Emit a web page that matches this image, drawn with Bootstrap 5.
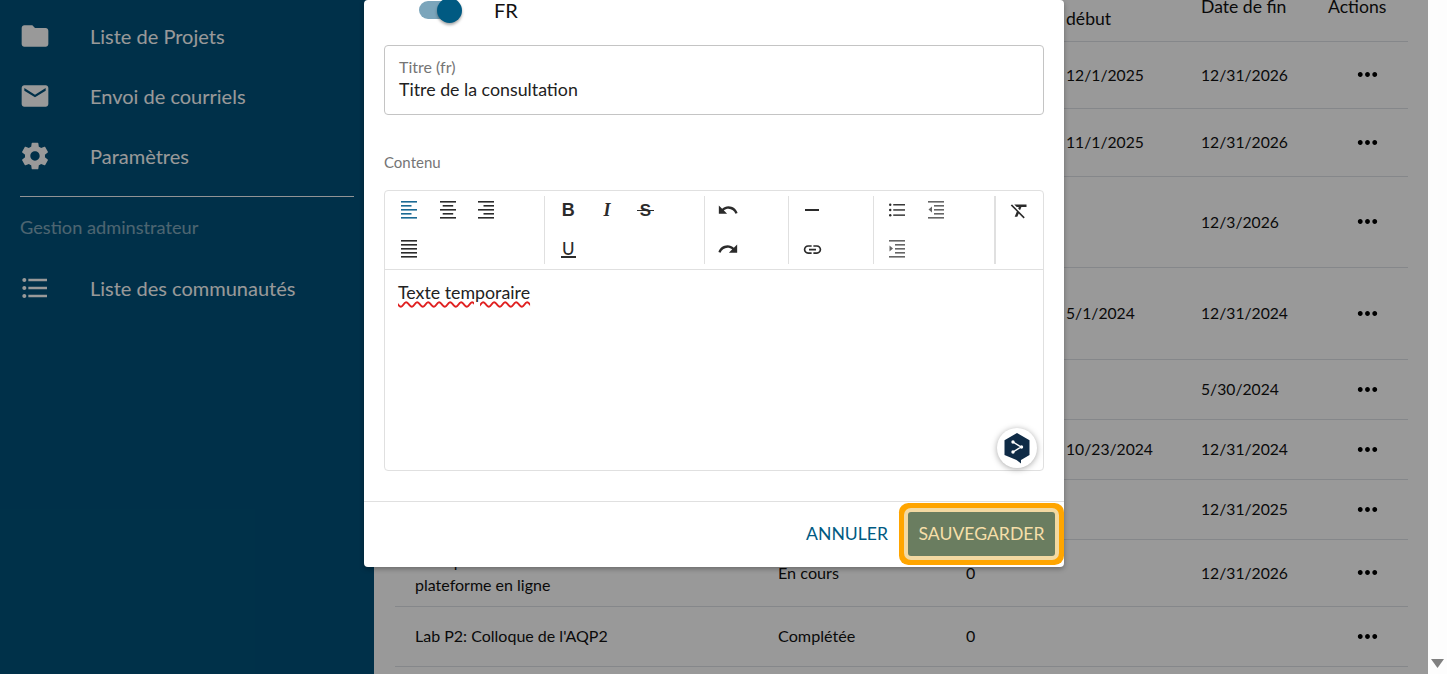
<!DOCTYPE html>
<html lang="fr">

<head>
  <meta charset="UTF-8" />
  <meta name="viewport" content="width=device-width, initial-scale=1.0" />
  <title>Consultation</title>
  <link href="https://cdn.jsdelivr.net/npm/bootstrap@5.3.0/dist/css/bootstrap.min.css" rel="stylesheet" />
  <style>
    html, body { height: 100%; overflow: hidden; }
    body { font-family: Lato, "Liberation Sans", sans-serif; background: #fff; color: #111; }

    /* Page frame */
    .page-frame { height: 100vh; }
    .page-area { min-width: 0; overflow: hidden; }
    .fake-scrollbar { width: 19px; background: #fdfdfd; }
    .fake-scrollbar svg { margin: 0 3px 6px; }

    /* Sidebar */
    .side-panel { width: 374px; background: #00517a; color: #fff; padding-top: 6px; }
    .side-item { height: 60px; font-size: 20px; }
    .side-icon { width: 32px; height: 32px; margin: 0 39px 0 19px; fill: #fff; }
    .side-rule { height: 1px; margin: 10px 20px 0; background: #fff; opacity: .95; }
    .side-label { font-size: 18.2px; height: 61px; padding: 17px 0 0 20px; opacity: .5; line-height: 26px; }

    /* Table behind the dialog */
    .table-area { padding: 0 20px 0 21px; margin-top: -27px; }
    .data-table { table-layout: fixed; font-size: 16px; width: 1013px; --bs-table-bg: transparent; --bs-table-color: #111; }
    .data-table th { font-weight: 400; line-height: 30px; vertical-align: middle; padding: 0 0 0 20px; height: 68px; font-size: 17.6px; }
    .data-table th:nth-child(4) { padding-bottom: 6px; }
    .data-table td { vertical-align: middle; padding: 0 0 0 20px; line-height: 24px; }
    .data-table td:nth-child(2) { font-size: 16.2px; }
    .data-table td:nth-child(4), .data-table td:nth-child(5) { font-size: 15.7px; }
    .c-name { width: 363px; }
    .c-state { width: 188px; }
    .c-count { width: 100px; }
    .c-start { width: 135px; }
    .c-end { width: 127px; }
    .c-act { width: 100px; }
    .r60 { height: 60px; }
    .r67 { height: 67px; }
    .r68 { height: 68px; }
    .r91 { height: 91px; }
    .r92 { height: 92px; }
    .dots { width: 29px; height: 29px; margin-left: 25px; display: block; fill: #000; }

    /* Backdrop and dialog */
    .dim-layer { position: absolute; inset: 0; background: rgba(0, 0, 0, .4); padding-bottom: 107px; }
    .dialog-box { width: 700px; flex: none; border: 0; border-radius: 4px; padding-top: 20px; background: #fff;
      box-shadow: 0 2px 5px rgba(0,0,0,.3); }
    .dialog-body { padding: 0 20px; height: 481px; }

    .lang-row { height: 45px; padding: 0 0 0 35px; margin-top: -20px; font-size: 20px; padding-bottom: 25px; }
    .lang-track { width: 38px; height: 18px; background: #7ba5bb; border-radius: 9px; position: relative; margin-right: 37px; }
    .lang-thumb { position: absolute; right: -5px; top: -3px; width: 25px; height: 25px; border-radius: 50%; background: #005a82;
      box-shadow: 0 2px 3px rgba(0,0,0,.35); }

    .title-field { height: 70px; border: 1px solid #c4c4c4; border-radius: 4px; padding: 12px 14px 0; }
    .title-label { font-size: 16px; line-height: 18px; color: #757575; }
    .title-value { font-size: 17.8px; line-height: 26px; color: #212121; }
    .body-label { font-size: 15px; color: #757575; line-height: 18px; margin: 38px 0 19px; }

    .editor-box { position: relative; height: 281px; border: 1px solid #e0e0e0; border-radius: 4px; }
    .tool-row { height: 79px; padding: 5px 0; border-bottom: 1px solid #e0e0e0; }
    .tool-group { display: grid; grid-auto-rows: 28px; row-gap: 11px; padding-left: 4px; border-right: 1px solid #e0e0e0; }
    .g3 { grid-template-columns: repeat(3, 38.6px); width: 160px; }
    .g3.first-group { padding-left: 5px; }
    .g1 { grid-template-columns: 38.6px; }
    .g2 { grid-template-columns: repeat(2, 38.6px); width: 122px; }
    .w84 { width: 84px; }
    .w85 { width: 85px; }
    .last-group { width: 48px; border-right: 0; border-left: 2px solid #e0e0e0; margin-left: -2px; }
    .tool-btn { color: #2b2b2b; font-size: 18px; line-height: 1; }
    .tool-btn svg { fill: #2b2b2b; display: block; }
    .tool-bold { font-family: "Liberation Sans", sans-serif; font-weight: 700; }
    .tool-ital { font-family: "Liberation Serif", serif; font-weight: 700; font-style: italic; }
    .tool-strike { position: relative; font-size: 17px; }
    .tool-strike::after { content: ""; position: absolute; left: -3px; right: -3px; top: 8px; height: 1.5px; background: #2b2b2b; }
    .tool-under { border-bottom: 2px solid #2b2b2b; padding: 0 1px; line-height: 15px; font-weight: 500; font-size: 17px; margin-top: 1px; }
    .editor-text { padding: 10px 13px; font-size: 17.8px; line-height: 24px; color: #222; }
    .spell-bad { text-decoration: underline wavy #e02020 1.5px; text-underline-offset: 2px; }
    .helper-bubble { position: absolute; right: 6px; bottom: 2px; width: 40px; height: 40px; border-radius: 50%; background: #fff;
      box-shadow: 0 1px 6px rgba(0,0,0,.35); }

    .dialog-foot { height: 66px; border-top: 1px solid #e0e0e0; padding-right: 9px; }
    .btn-cancel { color: #005a82; font-size: 17.6px; padding: 0; margin-right: 20px; border: 0; }
    .btn-save { width: 147px; height: 44px; padding: 2px 0 0; border: 0; border-radius: 3px; margin-bottom: 2px; font-size: 17.6px;
      background: #6a7d60; color: #f6dfa9; box-shadow: 0 0 0 4px #f3d9a2, 0 0 0 9px #ffa500; }
    .btn-save:hover { background: #6a7d60; color: #f6dfa9; }
  </style>
</head>

<body>
  <div class="page-frame d-flex">
    <div class="page-area flex-grow-1 position-relative d-flex">
      <!-- Sidebar -->
      <div class="side-panel flex-shrink-0">
        <div class="side-item d-flex align-items-center">
          <svg class="side-icon" viewBox="0 0 24 24"><path d="M10 4H4c-1.1 0-1.99.9-1.99 2L2 18c0 1.1.9 2 2 2h16c1.1 0 2-.9 2-2V8c0-1.1-.9-2-2-2h-8l-2-2z"/></svg>
          Liste de Projets
        </div>
        <div class="side-item d-flex align-items-center">
          <svg class="side-icon" viewBox="0 0 24 24"><path d="M20 4H4c-1.1 0-1.99.9-1.99 2L2 18c0 1.1.9 2 2 2h16c1.1 0 2-.9 2-2V6c0-1.1-.9-2-2-2zm0 4l-8 5-8-5V6l8 5 8-5v2z"/></svg>
          Envoi de courriels
        </div>
        <div class="side-item d-flex align-items-center">
          <svg class="side-icon" viewBox="0 0 24 24"><path d="M19.43 12.98c.04-.32.07-.64.07-.98s-.03-.66-.07-.98l2.11-1.65c.19-.15.24-.42.12-.64l-2-3.46c-.12-.22-.39-.3-.61-.22l-2.49 1c-.52-.4-1.08-.73-1.69-.98l-.38-2.65C14.46 2.18 14.25 2 14 2h-4c-.25 0-.46.18-.49.42l-.38 2.65c-.61.25-1.17.59-1.69.98l-2.49-1c-.23-.09-.49 0-.61.22l-2 3.46c-.13.22-.07.49.12.64l2.11 1.65c-.04.32-.07.65-.07.98s.03.66.07.98l-2.11 1.65c-.19.15-.24.42-.12.64l2 3.46c.12.22.39.3.61.22l2.49-1c.52.4 1.08.73 1.69.98l.38 2.65c.03.24.24.42.49.42h4c.25 0 .46-.18.49-.42l.38-2.65c.61-.25 1.17-.59 1.69-.98l2.49 1c.23.09.49 0 .61-.22l2-3.46c.12-.22.07-.49-.12-.64l-2.11-1.65zM12 15.5c-1.93 0-3.5-1.57-3.5-3.5s1.57-3.5 3.5-3.5 3.5 1.57 3.5 3.5-1.57 3.5-3.5 3.5z"/></svg>
          Paramètres
        </div>
        <div class="side-rule"></div>
        <div class="side-label">Gestion adminstrateur</div>
        <div class="side-item d-flex align-items-center">
          <svg class="side-icon" viewBox="0 0 24 24"><path d="M4 10.5c-.83 0-1.5.67-1.5 1.5s.67 1.5 1.5 1.5 1.5-.67 1.5-1.5-.67-1.5-1.5-1.5zm0-6c-.83 0-1.5.67-1.5 1.5S3.17 7.5 4 7.5 5.5 6.83 5.5 6 4.83 4.5 4 4.5zm0 12c-.83 0-1.5.68-1.5 1.5s.68 1.5 1.5 1.5 1.5-.68 1.5-1.5-.67-1.5-1.5-1.5zM7 19h14v-2H7v2zm0-6h14v-2H7v2zm0-8v2h14V5H7z"/></svg>
          Liste des communautés
        </div>
      </div>

      <!-- Table -->
      <div class="table-area flex-grow-1">
        <table class="table data-table mb-0">
          <colgroup>
            <col class="c-name" /><col class="c-state" /><col class="c-count" /><col class="c-start" /><col class="c-end" /><col class="c-act" />
          </colgroup>
          <thead>
            <tr><th></th><th></th><th></th><th>Date de<br />début</th><th>Date de fin</th><th>Actions</th></tr>
          </thead>
          <tbody id="rows"></tbody>
        </table>
      </div>

      <!-- Backdrop and dialog -->
      <div class="dim-layer d-flex justify-content-center align-items-end">
        <div class="modal-content dialog-box">
          <div class="dialog-body">
            <div class="lang-row d-flex align-items-center">
              <div class="lang-track"><div class="lang-thumb"></div></div>
              <span>FR</span>
            </div>
            <div class="title-field">
              <div class="title-label">Titre (fr)</div>
              <div class="title-value">Titre de la consultation</div>
            </div>
            <div class="body-label">Contenu</div>
            <div class="editor-box">
              <div class="tool-row d-flex">
                <div class="tool-group g3 first-group">
                  <div class="tool-btn d-flex justify-content-center align-items-center">
                    <svg width="16" height="18" viewBox="0 0 16 18"><g fill="#1b6a94"><rect y="0" width="16" height="1.6"/><rect y="4" width="10.5" height="1.6"/><rect y="8" width="16" height="1.6"/><rect y="12" width="10.5" height="1.6"/><rect y="16" width="16" height="1.6"/></g></svg>
                  </div>
                  <div class="tool-btn d-flex justify-content-center align-items-center">
                    <svg width="16" height="18" viewBox="0 0 16 18"><rect y="0" width="16" height="1.6"/><rect x="2.7" y="4" width="10.5" height="1.6"/><rect y="8" width="16" height="1.6"/><rect x="2.7" y="12" width="10.5" height="1.6"/><rect y="16" width="16" height="1.6"/></svg>
                  </div>
                  <div class="tool-btn d-flex justify-content-center align-items-center">
                    <svg width="16" height="18" viewBox="0 0 16 18"><rect y="0" width="16" height="1.6"/><rect x="5.5" y="4" width="10.5" height="1.6"/><rect y="8" width="16" height="1.6"/><rect x="5.5" y="12" width="10.5" height="1.6"/><rect y="16" width="16" height="1.6"/></svg>
                  </div>
                  <div class="tool-btn d-flex justify-content-center align-items-center">
                    <svg width="16" height="18" viewBox="0 0 16 18"><rect y="0" width="16" height="1.6"/><rect y="4" width="16" height="1.6"/><rect y="8" width="16" height="1.6"/><rect y="12" width="16" height="1.6"/><rect y="16" width="16" height="1.6"/></svg>
                  </div>
                </div>
                <div class="tool-group g3">
                  <div class="tool-btn tool-bold d-flex justify-content-center align-items-center">B</div>
                  <div class="tool-btn tool-ital d-flex justify-content-center align-items-center">I</div>
                  <div class="tool-btn tool-bold d-flex justify-content-center align-items-center"><span class="tool-strike">S</span></div>
                  <div class="tool-btn d-flex justify-content-center align-items-center"><span class="tool-under">U</span></div>
                </div>
                <div class="tool-group g1 w84">
                  <div class="tool-btn d-flex justify-content-center align-items-center">
                    <svg width="22" height="22" viewBox="0 0 24 24"><path d="M12.5 8c-2.65 0-5.05.99-6.9 2.6L2 7v9h9l-3.62-3.62c1.39-1.16 3.16-1.88 5.12-1.88 3.54 0 6.55 2.31 7.6 5.5l2.37-.78C21.08 11.03 17.15 8 12.5 8z"/></svg>
                  </div>
                  <div class="tool-btn d-flex justify-content-center align-items-center">
                    <svg width="22" height="22" viewBox="0 0 24 24"><path d="M18.4 10.6C16.55 8.99 14.15 8 11.5 8c-4.65 0-8.58 3.03-9.96 7.22L3.9 16c1.05-3.19 4.05-5.5 7.6-5.5 1.95 0 3.73.72 5.12 1.88L13 16h9V7l-3.6 3.6z"/></svg>
                  </div>
                </div>
                <div class="tool-group g1 w85">
                  <div class="tool-btn d-flex justify-content-center align-items-center">
                    <svg width="14" height="2" viewBox="0 0 14 2"><rect width="14" height="2"/></svg>
                  </div>
                  <div class="tool-btn d-flex justify-content-center align-items-center">
                    <svg width="21" height="21" viewBox="0 0 24 24"><path d="M3.9 12c0-1.71 1.39-3.1 3.1-3.1h4V7H7c-2.76 0-5 2.24-5 5s2.24 5 5 5h4v-1.9H7c-1.71 0-3.1-1.39-3.1-3.1zM8 13h8v-2H8v2zm9-6h-4v1.9h4c1.71 0 3.1 1.39 3.1 3.1s-1.39 3.1-3.1 3.1h-4V17h4c2.76 0 5-2.24 5-5s-2.24-5-5-5z"/></svg>
                  </div>
                </div>
                <div class="tool-group g2">
                  <div class="tool-btn d-flex justify-content-center align-items-center">
                    <svg width="16" height="14" viewBox="0 0 17 14"><circle cx="1.3" cy="1.5" r="1.3"/><circle cx="1.3" cy="7" r="1.3"/><circle cx="1.3" cy="12.5" r="1.3"/><rect x="4.5" y=".7" width="12.5" height="1.5"/><rect x="4.5" y="6.2" width="12.5" height="1.5"/><rect x="4.5" y="11.7" width="12.5" height="1.5"/></svg>
                  </div>
                  <div class="tool-btn d-flex justify-content-center align-items-center">
                    <svg width="16" height="18" viewBox="0 0 16 18"><g fill="#666"><rect y="0" width="16" height="1.6"/><rect x="6" y="4" width="10" height="1.6"/><rect x="6" y="8" width="10" height="1.6"/><rect x="6" y="12" width="10" height="1.6"/><rect y="16" width="16" height="1.6"/><path d="M4 5.500v6L.5 8.500z"/></g></svg>
                  </div>
                  <div class="tool-btn d-flex justify-content-center align-items-center">
                    <svg width="16" height="18" viewBox="0 0 16 18"><g fill="#666"><rect y="0" width="16" height="1.6"/><rect x="6" y="4" width="10" height="1.6"/><rect x="6" y="8" width="10" height="1.6"/><rect x="6" y="12" width="10" height="1.6"/><rect y="16" width="16" height="1.6"/><path d="M.5 5.500v6L4 8.500z"/></g></svg>
                  </div>
                </div>
                <div class="tool-group g1 last-group">
                  <div class="tool-btn d-flex justify-content-center align-items-center">
                    <svg width="21" height="21" viewBox="0 0 24 24"><path d="M3.270 5L2 6.270l6.970 6.970L6.500 19h3l1.570-3.660L16.730 21 18 19.730 3.550 5.270 3.270 5zM6 5v.180L8.820 8h2.400l-.720 1.680 2.100 2.100L14.210 8H20V5H6z"/></svg>
                  </div>
                </div>
              </div>
              <div class="editor-text"><span class="spell-bad">Texte temporaire</span></div>
              <div class="helper-bubble d-flex justify-content-center align-items-center">
                <svg width="26" height="31" viewBox="0 0 26 31"><path fill="#0f2b46" d="M13 0l12.500 7.200v14.800L17 27v3.500L12.500 27 .5 22V7.200z"/><path fill="none" stroke="#fff" stroke-width="1.300" d="M9 9l8 5-8 5"/><circle cx="9" cy="9" r="1.700" fill="#fff"/><circle cx="17.500" cy="14" r="1.700" fill="#fff"/><circle cx="9" cy="19" r="1.700" fill="#fff"/></svg>
              </div>
            </div>
          </div>
          <div class="dialog-foot d-flex justify-content-end align-items-center">
            <button type="button" class="btn btn-cancel">ANNULER</button>
            <button type="button" class="btn btn-save">SAUVEGARDER</button>
          </div>
        </div>
      </div>
    </div>

    <div class="fake-scrollbar d-flex align-items-end flex-shrink-0">
      <svg width="13" height="9" viewBox="0 0 13 9"><path fill="#808080" d="M0 0h13L6.500 9z"/></svg>
    </div>
  </div>

  <script src="https://cdn.jsdelivr.net/npm/bootstrap@5.3.0/dist/js/bootstrap.bundle.min.js"></script>
  <script>
    const rows = [
      ["r67", "", "", "", "12/1/2025", "12/31/2026"],
      ["r68", "", "", "", "11/1/2025", "12/31/2026"],
      ["r91", "", "", "", "", "12/3/2026"],
      ["r92", "", "", "", "5/1/2024", "12/31/2024"],
      ["r60", "", "", "", "", "5/30/2024"],
      ["r60", "", "", "", "10/23/2024", "12/31/2024"],
      ["r60", "", "", "", "", "12/31/2025"],
      ["r67", "Essai pilote de la<br />plateforme en ligne", "En cours", "0", "", "12/31/2026"],
      ["r60", "Lab P2: Colloque de l'AQP2", "Complétée", "0", "", ""],
      ["r60", "", "", "", "", ""]
    ];
    const dots = '<svg class="dots" viewBox="0 0 24 24"><path d="M6 10c-1.100 0-2 .9-2 2s.9 2 2 2 2-.9 2-2-.9-2-2-2zm12 0c-1.100 0-2 .9-2 2s.9 2 2 2 2-.9 2-2-.9-2-2-2zm-6 0c-1.100 0-2 .9-2 2s.9 2 2 2 2-.9 2-2-.9-2-2-2z"/></svg>';
    document.getElementById("rows").innerHTML = rows.map(r =>
      `<tr class="${r[0]}">` + r.slice(1).map(c => `<td>${c}</td>`).join("") + `<td>${dots}</td></tr>`
    ).join("");
  </script>
</body>

</html>
